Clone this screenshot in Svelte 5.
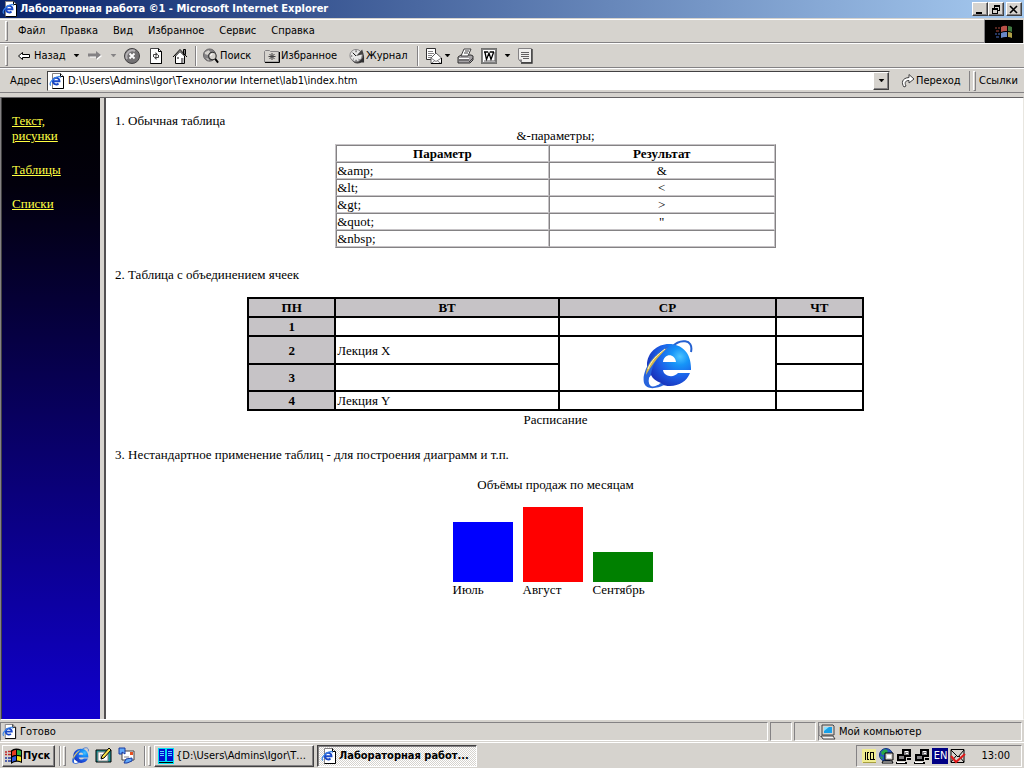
<script>
  const menus = ['Файл', 'Правка', 'Вид', 'Избранное', 'Сервис', 'Справка'];
  const links = ['Текст, рисунки', 'Таблицы', 'Списки'];
  const entities = [
    ['&amp;', '&'],
    ['&lt;', '<'],
    ['&gt;', '>'],
    ['&quot;', '"'],
    ['&nbsp;', '\u00a0'],
  ];
  const sales = [
    { month: 'Июль', value: 60, color: '#0000ff' },
    { month: 'Август', value: 75, color: '#ff0000' },
    { month: 'Сентябрь', value: 30, color: '#008000' },
  ];
  let address = $state('D:\\Users\\Admins\\Igor\\Технологии Internet\\lab1\\index.htm');
</script>

{#snippet page(size)}
  <svg width={size} height={size} viewBox="0 0 16 16" aria-hidden="true">
    <path d="M3.5.5h8l3 3v12h-11z" fill="#fff" stroke="#848284" />
    <path d="M11.5.5v3h3M14.5 3.5v12h-11" fill="none" stroke="#000" />
    <path d="M4 8.200h6.500A3.300 3.300 0 1 0 9.500 10.500" fill="none" stroke="#1848c8" stroke-width="1.900" />
    <path d="M2 12.500C-1 11 4 4.500 9.500 3.500q2-.3 2 1.200" fill="none" stroke="#3a86e8" stroke-width="1.200" />
  </svg>
{/snippet}

{#snippet tri()}
  <svg class="tri" width="7" height="4" viewBox="0 0 7 4" aria-hidden="true"><path d="M1 0h5L3.500 3z" fill="currentColor" stroke="currentColor" stroke-width=".5" /></svg>
{/snippet}

{#snippet network()}
  <svg width="16" height="16" viewBox="0 0 16 16" shape-rendering="crispEdges" aria-hidden="true">
    <path d="M6 1h9v8H6zM1 6h9v7H1zM0 14h11v2H0zM11 10h4v2h-4z" fill="#000" />
    <path d="M8 3h5v4H8zM3 8h5v3H3z" fill="#848284" />
    <path d="M9 3h3v1H9zM10 5h2v1h-2zM1 14h8v1H1z" fill="#fff" />
  </svg>
{/snippet}

{#snippet explorer(size, id)}
  <svg width={size} height={size} viewBox="0 0 50 50" aria-hidden="true">
    <defs>
      <radialGradient id={id} cx=".75" cy=".3" r=".8">
        <stop offset="0" stop-color="#4cc4ff" />
        <stop offset=".25" stop-color="#1695f8" />
        <stop offset=".6" stop-color="#1c60e8" />
        <stop offset="1" stop-color="#1830b8" />
      </radialGradient>
    </defs>
    <path d="M29 8C36 0 51-1 48 13" fill="none" stroke="#2460d0" stroke-width="2" />
    <path
      fill-rule="evenodd"
      fill="url(#{id})"
      d="M26 5C39 5 48 14 48 29V31H20C21 38 31 39 35 34H47C44 42 36 47 27 47C14 47 4 38 4 26C4 14 14 5 26 5ZM20 23H33C32 14 21 14 20 23Z"
    />
    <path
      fill-rule="evenodd"
      fill="#2864dc"
      d="M26 7C12 11-2 32 1 44C4 52 15 49 21 46L18 44C12 48 7 49 6 44C5 41 7 38 8 36C9 25 16 16 26 7Z"
    />
    <path d="M6 39C5 45 8 50 18 44C13 42 10 40 8 36Z" fill="#fff" />
    <path d="M24 9C13 15 3 25 3 36C8 27 14 19 24 9Z" fill="#d8b848" />
    <path d="M22 10C14 16 8 22 5 30" fill="none" stroke="#fff8c8" />
  </svg>
{/snippet}

{#snippet flag(w, h)}
  <svg width={w} height={h} viewBox="0 0 18 16" aria-hidden="true">
    <path d="M6 2.500Q10-1 17 2V15Q11 12 6 16Z" fill="#000" />
    <path d="M7 3.500q2-2 4-1.500v5q-2-.5-4 1z" fill="#e83c20" />
    <path d="M12 2q2 0 4 1v4.500q-2-.8-4-.5z" fill="#28b040" />
    <path d="M7 9.500q2-1.500 4-1.500v4.500q-2 0-4 1.500z" fill="#2c58e0" />
    <path d="M12 8q2 0 4 .8v4.700q-2-1-4-1z" fill="#f8e020" />
    <path d="M0 4h2M3 3.500h3M0 6.500h2M3 6.500h3" stroke="#c02828" stroke-width="1.500" />
    <path d="M0 10h2M3 10h3M0 13h2M3 13h3" stroke="#2038a0" stroke-width="1.500" />
  </svg>
{/snippet}

<div class="desktop">
  <header class="title">
    {@render page(16)}
    <h1>Лабораторная работа ©1 - Microsoft Internet Explorer</h1>
    <div class="window-buttons">
      <button aria-label="Свернуть">
        <svg width="10" height="9" viewBox="0 0 10 9" aria-hidden="true"><path d="M1 7h6v2H1z" /></svg>
      </button>
      <button aria-label="Восстановить">
        <svg width="10" height="9" viewBox="0 0 10 9" shape-rendering="crispEdges" aria-hidden="true">
          <path d="M3 0h6v6H7V5h1V2H4v1H3zM1 3h6v6H1zm1 2v3h4V5z" fill-rule="evenodd" />
        </svg>
      </button>
      <button class="close" aria-label="Закрыть">
        <svg width="10" height="9" viewBox="0 0 10 9" aria-hidden="true"><path d="M1 1l7 7M8 1L1 8" stroke="#000" stroke-width="1.600" /></svg>
      </button>
    </div>
  </header>

  <div class="menu-row">
    <nav class="band menu">
      <span class="grip"></span>
      {#each menus as item}
        <button>{item}</button>
      {/each}
    </nav>
    <div class="brand">
      <svg width="22" height="16" viewBox="0 0 22 16" aria-hidden="true">
        <path d="M8 3q3-2 6-1v5q-3-.5-6 1z" fill="#b85048" /><path d="M15 2q2 0 4 1v5q-2-1-4-1z" fill="#407840" />
        <path d="M8 9q3-1.500 6-1v5q-3-.5-6 1z" fill="#6888c8" /><path d="M15 8q2 0 4 1v5q-2-1-4-1z" fill="#b0a048" />
        <path d="M2 4h2M5 4h2M3 7h3" stroke="#703028" stroke-width="1.500" /><path d="M2 10h2M5 10h2M3 13h3" stroke="#304880" stroke-width="1.500" />
      </svg>
    </div>
  </div>

  <div class="band tools">
    <span class="grip"></span>
    <button class="back">
      <svg width="15" height="10" viewBox="0 0 15 10" aria-hidden="true"><path d="M1.500 5l4-3.500v2h7v3h-7v2z" fill="#fff" stroke="#000" /></svg>
      Назад
    </button>
    <button class="more" aria-label="История назад">{@render tri()}</button>
    <button class="forward" aria-label="Вперёд" disabled>
      <svg width="15" height="11" viewBox="0 0 15 11" aria-hidden="true">
        <path d="M2 4.500h7V2l5 4-5 4V7.500H2z" fill="#fff" /><path d="M0 3.500h8V1l5 4-5 4V6.500H0z" fill="#848284" />
      </svg>
    </button>
    <button class="more off" aria-label="История вперёд" disabled>{@render tri()}</button>
    <button class="icon stop" aria-label="Остановить">
      <svg width="16" height="16" viewBox="0 0 16 16" aria-hidden="true">
        <circle cx="8" cy="8" r="7.500" fill="#737173" stroke="#424142" />
        <path d="M3 11A6 6 0 0 1 11 3" fill="none" stroke="#b5b2b5" stroke-width="2" />
        <path d="M5.500 5.500l5 5M10.500 5.500l-5 5" stroke="#fff" stroke-width="1.800" />
      </svg>
    </button>
    <button class="icon" aria-label="Обновить">
      <svg width="16" height="16" viewBox="0 0 16 16" aria-hidden="true">
        <path d="M2.500.5h8l3 3v12h-11z" fill="#fff" stroke="#424142" /><path d="M10.500.5v3h3v12h-11" fill="none" stroke="#000" />
        <path d="M5.500 9V6.500H8M10.500 7v2.500H8" fill="none" stroke="#424142" />
        <path d="M7.500 4l2.500 2.500L7.500 9zM8.500 7L6 9.500 8.500 12z" fill="#424142" />
      </svg>
    </button>
    <button class="icon" aria-label="Домой">
      <svg width="16" height="16" viewBox="0 0 16 16" aria-hidden="true">
        <path d="M11.500 1.500h2v5h-2z" fill="#848284" stroke="#000" />
        <path d="M3.500 8v7.500h9V8L8 3.500z" fill="#fff" stroke="#000" />
        <path d="M1 9l7-7.500L15 9" fill="none" stroke="#000" />
        <path d="M5 9h2v2H5zM9 10h2.500v5H9z" fill="#848284" />
      </svg>
    </button>
    <span class="split"></span>
    <button class="search">
      <svg width="16" height="16" viewBox="0 0 17 16" aria-hidden="true">
        <circle cx="7" cy="7" r="6.500" fill="#848284" stroke="#636163" />
        <path d="M2 4l4-2 2 2-3 3-3-1zM3 10l3 1v2z" fill="#d6d3ce" />
        <circle cx="10" cy="8" r="4" fill="#d6d3ce" stroke="#313031" stroke-width="1.200" />
        <path d="M8 8q0-2 2-2" fill="none" stroke="#fff" />
        <path d="M13 11l3 4" stroke="#000" stroke-width="2" />
      </svg>
      Поиск
    </button>
    <button class="favorites">
      <svg width="16" height="14" viewBox="0 0 16 14" aria-hidden="true">
        <path d="M.5 13V2.500l1-1h4l1 1h8V13z" fill="#d6d3ce" stroke="#848284" />
        <path d="M1 13.500h14.500V3" fill="none" stroke="#000" />
        <path d="M8 4v7M4.500 7.500h7M5.500 5l5 5M10.500 5l-5 5" stroke="#424142" />
      </svg>
      Избранное
    </button>
    <button class="history">
      <svg width="16" height="16" viewBox="0 0 17 16" aria-hidden="true">
        <circle cx="9" cy="9" r="6.500" fill="#525052" stroke="#313031" />
        <circle cx="7.500" cy="7.500" r="6.500" fill="#e8e8e8" stroke="#848284" />
        <path d="M7.500 8L14 1l1.500 5z" fill="#424142" /><path d="M7.500 8L4 4.500" stroke="#000" />
        <path d="M7.500 2v2M7.500 12v1.500M2 8h1.500M4 12l1-1M11 12l-1-1" stroke="#313031" />
        <path d="M10 15l6-6v6z" fill="#313031" />
      </svg>
      Журнал
    </button>
    <span class="split"></span>
    <button class="mail" aria-label="Почта">
      <svg width="17" height="16" viewBox="0 0 17 16" aria-hidden="true">
        <path d="M1.500.5h9v11h-9z" fill="#fff" stroke="#313031" />
        <path d="M3 3.500h5M3 5.500h6M3 7.500h4M3 9.500h3" stroke="#848284" />
        <path d="M6 10l5-5 5.500 5v5.500H6z" fill="#fff" stroke="#636163" />
        <path d="M6 10l5 3.500 5.500-3.500M6 15.500l4-3M16 15.500l-4-3" fill="none" stroke="#848284" />
        <path d="M6 15.500h10.500V10" fill="none" stroke="#000" />
      </svg>
      {@render tri()}
    </button>
    <button class="icon" aria-label="Печать">
      <svg width="17" height="16" viewBox="0 0 17 16" aria-hidden="true">
        <path d="M1 9l3-2h10l2 1v4l-3 3H1z" fill="#a5a2a5" stroke="#313031" />
        <path d="M4 8l3-7h7l-3 7z" fill="#fff" stroke="#424142" />
        <path d="M8 3h4M7 5h4M2 12h10M12 14l4-4" stroke="#424142" />
        <path d="M2 10h10v1H2z" fill="#fff" />
      </svg>
    </button>
    <button class="icon" aria-label="Правка в Word">
      <svg width="16" height="16" viewBox="0 0 16 16" aria-hidden="true">
        <path d="M.5.5h15v15H.5z" fill="#fff" stroke="#000" stroke-dasharray="1 1" />
        <path d="M1.500 1.500h13v13h-13z" fill="none" stroke="#000" stroke-dasharray="1 1" stroke-dashoffset="1" />
        <path d="M3 4h4M9 4h4M4 4.500l1.500 7L8 5l2 6.500 2.500-7" fill="none" stroke="#000" stroke-width="1.300" />
        <path d="M3 13h11V4" fill="none" stroke="#636163" />
      </svg>
    </button>
    <button class="more" aria-label="Другие редакторы">{@render tri()}</button>
    <button class="icon" aria-label="Обсудить">
      <svg width="16" height="16" viewBox="0 0 16 16" aria-hidden="true">
        <path d="M1.500.5h13v14h-10l-3-3z" fill="#f0efee" stroke="#848284" /><path d="M4 15h11V1" fill="none" stroke="#313031" stroke-width="1.300" />
        <path d="M4 4.500h8M4 6.500h8M4 8.500h8M6 10.500h6" stroke="#636163" /><path d="M1.500 11.500h3.500v3z" fill="#848284" />
      </svg>
    </button>
  </div>

  <div class="band address">
    <label for="address">Адрес</label>
    <div class="field">
      {@render page(16)}
      <input id="address" type="text" bind:value={address} />
      <button class="drop" aria-label="Показать список адресов">{@render tri()}</button>
    </div>
    <button class="go">
      <svg width="14" height="15" viewBox="0 0 14 15" aria-hidden="true">
        <path d="M3 14C0 10 1 5 8 4.500V1.500L13 6 8 10V7.500C5 7.500 3 9 5 13z" fill="#fff" stroke="#424142" />
      </svg>
      Переход
    </button>
    <div class="links-band"><span class="grip"></span><button>Ссылки</button></div>
  </div>

  <div class="frames">
    <aside>
      {#each links as link}
        <p><a href="#{link}">{link}</a></p>
      {/each}
    </aside>
    <main>
      <section>
        <h2>1. Обычная таблица</h2>
        <table class="entities">
          <caption>&amp;-параметры;</caption>
          <thead><tr><th>Параметр</th><th>Результат</th></tr></thead>
          <tbody>
            {#each entities as [code, result]}
              <tr><td>{code}</td><td class="result">{result}</td></tr>
            {/each}
          </tbody>
        </table>
      </section>

      <section>
        <h2>2. Таблица с объединением ячеек</h2>
        <table class="schedule">
          <caption>Расписание</caption>
          <colgroup><col class="narrow" /><col class="tuesday" /><col /><col class="narrow" /></colgroup>
          <thead><tr><th>ПН</th><th>ВТ</th><th>СР</th><th>ЧТ</th></tr></thead>
          <tbody>
            <tr><th>1</th><td></td><td></td><td></td></tr>
            <tr class="tall"><th>2</th><td>Лекция X</td><td class="logo" rowspan="2">{@render explorer(50, 'logo-big')}</td><td></td></tr>
            <tr class="short"><th>3</th><td></td><td></td></tr>
            <tr><th>4</th><td>Лекция Y</td><td></td><td></td></tr>
          </tbody>
        </table>
      </section>

      <section>
        <h2>3. Нестандартное применение таблиц - для построения диаграмм и т.п.</h2>
        <figure>
          <figcaption>Объёмы продаж по месяцам</figcaption>
          <div class="chart">
            {#each sales as { month, value, color }}
              <div class="column">
                <div class="bar" style="height: {value}px; background: {color}"></div>
                <span>{month}</span>
              </div>
            {/each}
          </div>
        </figure>
      </section>
    </main>
  </div>

  <footer class="status">
    <div class="pane ready">{@render page(15)}<span>Готово</span></div>
    <div class="pane"></div>
    <div class="pane"></div>
    <div class="pane zone">
      <svg width="17" height="16" viewBox="0 0 17 16" aria-hidden="true">
        <path d="M3 1h11l1 1v9H3z" fill="#d6d3ce" stroke="#424142" />
        <path d="M5 3h8v6H5z" fill="#18a0e8" /><path d="M5 3h5L5 7z" fill="#8ce0ff" />
        <path d="M2 12h12l2 3H4z" fill="#f4f4f4" stroke="#424142" /><path d="M0 2v9l3 3" fill="none" stroke="#848284" />
      </svg>
      <span>Мой компьютер</span>
    </div>
  </footer>

  <div class="taskbar">
    <button class="start">{@render flag(18, 16)}Пуск</button>
    <span class="split"></span><span class="grip"></span>
    <div class="quick">
      <button aria-label="Internet Explorer">{@render explorer(17, 'logo-small')}</button>
      <button aria-label="Свернуть все окна">
        <svg width="17" height="17" viewBox="0 0 17 17" aria-hidden="true">
          <path d="M1 3h15v12H1z" fill="#189a9c" stroke="#000" /><path d="M3 5h10v9H3z" fill="#fff" stroke="#848284" />
          <path d="M5 8h3M5 10h2" stroke="#848284" />
          <path d="M6 12l1-3 7-8 2 2-7 8z" fill="#f8e048" stroke="#000" />
        </svg>
      </button>
      <button aria-label="Outlook Express">
        <svg width="17" height="17" viewBox="0 0 17 17" aria-hidden="true">
          <path d="M4 4h12v9H4z" fill="#fff" stroke="#424142" /><path d="M6 10h5" stroke="#848284" />
          <path d="M12 5h3v3h-3z" fill="#e85020" />
          <path d="M7 1H1v6h3V5l3 2z" fill="#60a8f8" stroke="#1838a0" />
          <path d="M9 16l5-2v-3l-6 1-2 4z" fill="#60a8f8" stroke="#1838a0" />
        </svg>
      </button>
    </div>
    <span class="split"></span><span class="grip"></span>
    <button class="task">
      <svg width="16" height="16" viewBox="0 0 16 16" shape-rendering="crispEdges" aria-hidden="true">
        <path d="M0 0h16v16H0z" fill="#00e0f0" /><path d="M1 1h6v12H1zM9 1h6v12H9z" fill="#0010d0" />
        <path d="M2 3h4M2 5h4M2 7h4M10 3h4M10 5h4M10 7h4" stroke="#58d8ff" /><path d="M1 14h14" stroke="#000" />
      </svg>
      <span>&lbrace;D:\Users\Admins\Igor\Т...</span>
    </button>
    <button class="task active">{@render page(16)}<span>Лабораторная работ...</span></button>
    <div class="tray">
      <svg width="14" height="14" viewBox="0 0 14 14" shape-rendering="crispEdges" aria-hidden="true">
        <path d="M0 0h14v14H0z" fill="#f0ec90" /><path d="M1 13h13V1" fill="none" stroke="#a8a040" />
        <path d="M3 3h1v8H3zM5 3h1v8H5zM8 3h1v8H8zM11 3h1v8h-1zM5 3h2v1H5zM5 10h2v1H5zM8 3h4v1H8zM8 10h5v1H8z" />
      </svg>
      <svg width="16" height="16" viewBox="0 0 16 16" aria-hidden="true">
        <circle cx="8" cy="7" r="6.500" fill="#2858c0" stroke="#103080" /><path d="M3 4l4-3 3 2-2 3-4 1zM2 8l3 1-1 3z" fill="#28a848" />
        <path d="M7 5h8v7H7z" fill="#d6d3ce" stroke="#000" /><path d="M9 7h4v3H9z" fill="#fff" />
        <path d="M5 13h9l1 2H4z" fill="#fff" stroke="#000" />
      </svg>
      {@render network()}
      {@render network()}
      <span class="lang">EN</span>
      <svg width="16" height="16" viewBox="0 0 16 16" aria-hidden="true">
        <path d="M1 1.500h13v13H1z" fill="#d6d3ce" stroke="#000" /><path d="M1 2l7 7 6-7M1 14l5-6M14 14L9 8" fill="none" stroke="#000" />
        <path d="M1 8l5 6L15 6" fill="none" stroke="#e01818" stroke-width="2" />
      </svg>
      <time>13:00</time>
    </div>
  </div>
</div>

<style>
  :global(body) {
    margin: 0;
    background: #d6d3ce;
  }
  .desktop {
    display: flex;
    flex-direction: column;
    min-height: 100vh;
    color: #000;
    background: #d6d3ce;
    font: 11px/14px 'DejaVu Sans Condensed', 'Noto Sans', sans-serif;
  }
  svg {
    display: block;
    flex: none;
  }
  button,
  input {
    margin: 0;
    padding: 0;
    border: 0;
    background: none;
    color: inherit;
    font: inherit;
    white-space: nowrap;
  }
  button {
    display: flex;
    align-items: center;
    flex: none;
  }
  .title {
    display: flex;
    align-items: center;
    gap: 2px;
    height: 18px;
    padding: 0 2px;
    color: #fff;
    background: linear-gradient(90deg, #0a246a, #a6caf0);
  }
  h1 {
    flex: 1;
    margin: 0;
    font-size: 11px;
    font-weight: bold;
  }
  .window-buttons {
    display: flex;
  }
  .window-buttons button,
  .drop {
    justify-content: center;
    width: 16px;
    height: 14px;
    background: #d6d3ce;
    border: 1px solid;
    border-color: #fff #404040 #404040 #fff;
    box-shadow: inset -1px -1px #848284;
  }
  .window-buttons .close {
    margin-left: 2px;
  }
  .band {
    display: flex;
    align-items: center;
    padding-left: 5px;
    border-top: 1px solid #fff;
    border-bottom: 1px solid #848284;
  }
  .grip {
    flex: none;
    align-self: center;
    width: 1px;
    height: 18px;
    border: 1px solid;
    border-color: #fff #848284 #848284 #fff;
  }
  .split {
    flex: none;
    align-self: center;
    width: 1px;
    height: 20px;
    border-left: 1px solid #848284;
    background: #fff;
  }
  .menu-row {
    display: flex;
    margin-top: 1px;
  }
  .menu {
    flex: 1;
    height: 22px;
    border-right: 1px solid #848284;
  }
  .menu button {
    padding: 0 8px 0 7px;
  }
  .menu .grip {
    margin-right: 3px;
  }
  .brand {
    display: grid;
    place-items: center;
    width: 38px;
    margin: 1px 1px 0 0;
    background: #000;
  }
  .tools {
    height: 23px;
  }
  .tools .back {
    gap: 2px;
    width: 62px;
    padding-left: 9px;
  }
  .tri {
    margin: 0 auto;
  }
  .more {
    width: 12px;
  }
  .off {
    color: #848284;
  }
  .forward {
    width: 25px;
    padding-left: 6px;
  }
  .icon {
    justify-content: center;
    width: 24px;
  }
  .stop {
    margin-left: 1px;
  }
  .tools .split {
    margin: 0 6px 0 3px;
  }
  .search {
    gap: 1px;
    width: 61px;
  }
  .favorites {
    gap: 1px;
    width: 85px;
  }
  .history {
    gap: 1px;
    width: 65px;
  }
  .mail {
    width: 28px;
  }
  .address {
    height: 23px;
    padding-left: 10px;
  }
  .address label {
    flex: none;
    width: 37px;
  }
  .field {
    display: flex;
    flex: 1;
    align-items: center;
    gap: 3px;
    height: 18px;
    padding-left: 1px;
    background: #fff;
    border: 1px solid;
    border-color: #424142 #d6d3ce #d6d3ce #424142;
  }
  .field input {
    flex: 1;
    min-width: 0;
    outline: 0;
  }
  .drop {
    height: 18px;
  }
  .go {
    gap: 1px;
    width: 79px;
    padding: 0 0 0 11px;
  }
  .links-band {
    display: flex;
    align-items: center;
    gap: 3px;
    width: 51px;
    padding-left: 3px;
    border-left: 1px solid #848284;
  }
  .frames {
    display: flex;
    flex: 1;
    margin-top: 4px;
    border: 1px solid;
    border-color: #636163 #e8e6e0 #fff #848284;
    font: 13px/15px 'Liberation Serif', 'Times New Roman', serif;
  }
  aside {
    flex: none;
    box-sizing: border-box;
    width: 99px;
    padding: 15px 16px 15px 10px;
    border-left: 1px solid #424142;
    background: linear-gradient(#000, #02000c 14%, #1000cc);
  }
  aside p {
    margin: 0 0 19px;
  }
  aside a {
    color: #ffff42;
  }
  main {
    flex: 1;
    margin-left: 4px;
    padding: 15px 27px 15px 9px;
    border-left: 2px solid #525052;
    background: #fff;
  }
  section {
    margin-bottom: 19px;
  }
  h2 {
    margin: 0;
    font-size: 13px;
    font-weight: normal;
  }
  table {
    margin: 0 auto;
    table-layout: fixed;
    border-spacing: 0;
  }
  caption {
    padding-bottom: 1px;
  }
  .entities {
    width: 50%;
    border: 1px solid;
    border-color: #c6c3c6 #848284 #848284 #c6c3c6;
  }
  .entities th:first-child {
    width: 48%;
  }
  .entities th,
  .entities td {
    padding: 0;
    border: 1px solid;
    border-color: #848284 #c6c3c6 #c6c3c6 #848284;
  }
  .entities .result {
    text-align: center;
  }
  .schedule {
    width: 70%;
    margin-top: 15px;
    border-collapse: collapse;
  }
  .schedule caption {
    caption-side: bottom;
    padding-top: 1px;
  }
  .schedule th,
  .schedule td {
    height: 15px;
    padding: 1px;
    border: 2px solid #000;
  }
  .schedule .tall th {
    height: 24px;
  }
  .schedule .short th {
    height: 23px;
  }
  .schedule th {
    background: #c6c3c6;
  }
  .schedule .logo {
    padding: 0;
  }
  .logo :global(svg) {
    margin: 0 auto;
  }
  .narrow {
    width: 87px;
  }
  .tuesday {
    width: 224px;
  }
  figure {
    margin: 15px 0 0;
    text-align: center;
  }
  .chart {
    display: flex;
    justify-content: center;
    align-items: flex-end;
    gap: 10px;
    margin-top: 15px;
    padding-right: 6px;
    text-align: left;
  }
  .column {
    width: 60px;
  }
  .status {
    display: flex;
    gap: 2px;
    height: 19px;
    margin-top: 2px;
    padding-right: 2px;
  }
  .pane {
    display: flex;
    align-items: center;
    gap: 3px;
    width: 20px;
    border: 1px solid;
    border-color: #848284 #fff #fff #848284;
  }
  .ready {
    flex: 1;
    padding-left: 1px;
  }
  .zone {
    width: 202px;
  }
  .taskbar {
    display: flex;
    align-items: center;
    height: 25px;
    margin-top: 1px;
    padding: 0 2px;
    border-top: 1px solid #fff;
  }
  .start,
  .task {
    box-sizing: border-box;
    height: 22px;
    border: 1px solid;
    border-color: #fff #424142 #424142 #fff;
    box-shadow: inset -1px -1px #848284;
  }
  .start {
    width: 53px;
    margin-right: 4px;
    padding-left: 2px;
    font-weight: bold;
  }
  .taskbar .grip {
    margin-left: 2px;
  }
  .quick {
    display: flex;
    gap: 6px;
    padding: 0 9px 0 6px;
  }
  .task {
    gap: 2px;
    width: 160px;
    margin-left: 3px;
    padding-left: 3px;
    overflow: hidden;
  }
  .active {
    font-weight: bold;
    background: repeating-conic-gradient(#fff 0 25%, #d6d3ce 0 50%) 0 0 / 2px 2px;
    border-color: #424142 #fff #fff #424142;
    box-shadow: inset 1px 1px #848284;
  }
  .tray {
    display: flex;
    align-items: center;
    gap: 2px;
    box-sizing: border-box;
    height: 22px;
    margin-left: auto;
    padding: 0 11px 0 5px;
    border: 1px solid;
    border-color: #848284 #fff #fff #848284;
  }
  .lang {
    width: 16px;
    color: #fff;
    background: #000084;
    line-height: 16px;
    text-align: center;
  }
  time {
    margin-left: 13px;
  }
</style>
